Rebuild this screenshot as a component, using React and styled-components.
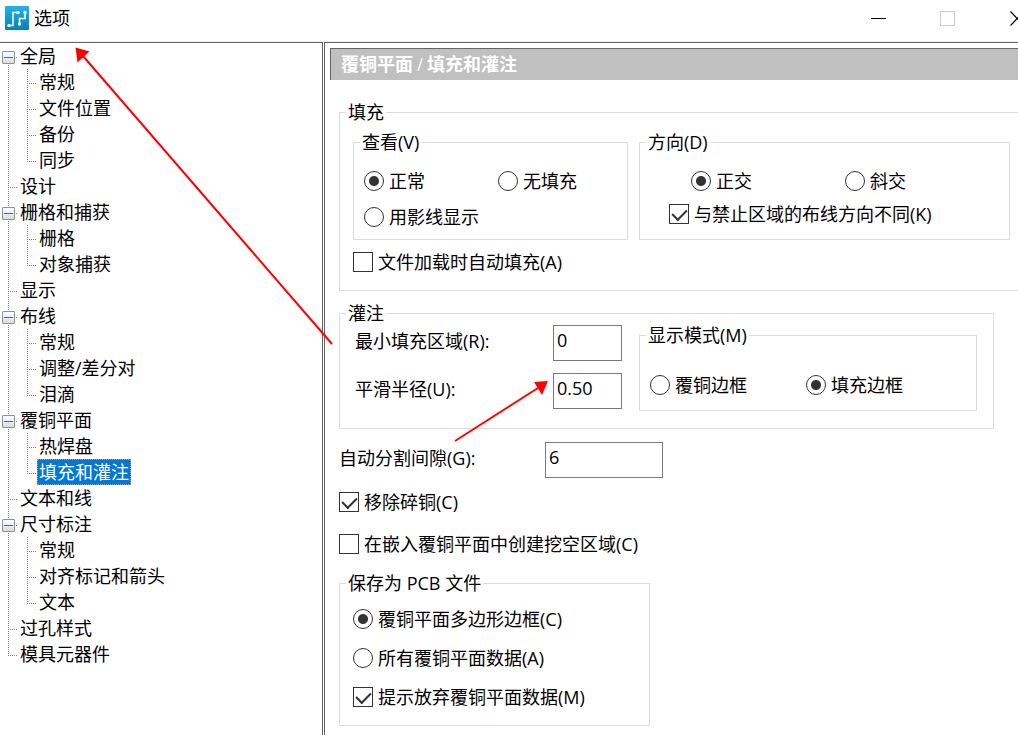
import { useState } from 'react'
import styled, { createGlobalStyle, css } from 'styled-components'

const GlobalStyle = createGlobalStyle`
    * {
        box-sizing: border-box;
    }
    html, body {
        margin: 0;
        overflow: hidden;
        background: #fff;
    }
    body, button, input {
        font-family: "Open Sans", "Noto Sans CJK SC", sans-serif;
        font-size: 18px;
        line-height: 20px;
        color: #000;
    }
`;

const Window = styled.div`
    position: relative;
    display: flex;
    flex-direction: column;
    min-width: 1052px;
    min-height: 100vh;
`;

const TitleBar = styled.header`
    display: flex;
    align-items: center;
    height: 42px;
    padding: 0 1px 5px 5px;
    border-bottom: 1px solid #f0f0f0;
`;

const Title = styled.h1`
    flex: 1;
    margin: 0 0 0 5px;
    font-size: 18px;
    font-weight: 400;
    line-height: 20px;
`;

const WindowButton = styled.button`
    display: flex;
    align-items: center;
    justify-content: center;
    width: 69px;
    height: 36px;
    padding: 0;
    border: 0;
    background: transparent;
`;

const Panes = styled.div`
    display: flex;
    flex: 1;
    gap: 1px;
`;

const TreePane = styled.nav`
    width: 323px;
    border-top: 1px solid #646464;
    border-right: 1px solid #646464;
`;

const TreeList = styled.ul`
    margin: 0;
    padding: 0;
    list-style: none;
`;

const TreeRow = styled.li`
    display: flex;
    height: 26px;
`;

const dotsDown = 'repeating-linear-gradient(to bottom, #808080 0 1px, transparent 1px 2px)';
const dotsAcross = 'repeating-linear-gradient(to right, #808080 0 1px, transparent 1px 2px)';

const Guide = styled.span`
    position: relative;
    flex: none;
    width: ${props => props.$inner ? 19 : 18}px;
    background-image: ${dotsDown}, ${dotsAcross};
    background-repeat: no-repeat;
    background-position: ${props => props.$inner ? 9 : 8}px ${props => props.$from || 0}px, right 14px;
    background-size: 1px ${props => props.$to || 26}px, ${props => props.$branch ? 10 : 0}px 1px;
`;

const Expander = styled.button`
    position: absolute;
    left: 2px;
    top: 8px;
    width: 13px;
    height: 13px;
    padding: 0;
    border: 1px solid #919191;
    border-radius: 1px;
    background: linear-gradient(#4b63a7, #4b63a7) center / 9px 1px no-repeat, linear-gradient(#fff, #dcdcdc);
`;

const TreeLabel = styled.span`
    height: 26px;
    padding: 0 2px;
    line-height: 26px;
    white-space: nowrap;
    ${props => props.$selected && css`
        padding: 0 1px;
        border: 1px dotted #ff8728;
        line-height: 24px;
        background: #0078d7;
        color: #fff;
    `}
`;

const SettingsPane = styled.main`
    flex: 1;
    padding: 5px 0 0 5px;
    border-top: 1px solid #646464;
    border-left: 1px solid #646464;
`;

const Banner = styled.h2`
    height: 32px;
    margin: 0;
    padding-left: 10px;
    border-top: 1px solid #646464;
    border-left: 1px solid #646464;
    background: #c0c0c0;
    color: #fff;
    font-family: "Liberation Serif", "Noto Sans CJK SC", serif;
    font-size: 18px;
    font-weight: 700;
    line-height: 32px;
`;

const Form = styled.form`
    display: flex;
    flex-direction: column;
    align-items: flex-start;
    padding: 22px 28px 0 9px;
`;

const Group = styled.fieldset`
    min-width: 0;
    margin: 0;
    padding: ${props => props.$padding};
    border: 1px solid #dcdcdc;
`;

const FillGroup = styled(Group)`
    align-self: stretch;
    margin-bottom: 12px;
`;

const PourGroup = styled(Group)`
    align-self: stretch;
    margin: 0 30px 13px 0;
`;

const PcbGroup = styled(Group)`
    width: 311px;
    margin-top: 19px;
`;

// the legend starts 7px in from the left edge, whatever padding the group has
const Legend = styled.legend`
    margin-left: ${props => 6 - props.$inset}px;
    padding: 0 2px;
    line-height: 20px;
`;

const FillColumns = styled.div`
    display: grid;
    grid-template-columns: 275fr 371fr;
    gap: 11px;
    margin-bottom: 12px;
`;

const PourColumns = styled.div`
    display: grid;
    grid-template-columns: 269px 1fr;
    align-items: start;
    gap: 17px;
`;

const Stack = styled.div`
    display: flex;
    flex-direction: column;
    align-items: flex-start;
    gap: ${props => props.$gap}px;
`;

const FieldStack = styled(Stack)`
    padding-left: 2px;
`;

const OptionRow = styled.div`
    display: grid;
    grid-template-columns: ${props => props.$column}px auto;
    padding-left: ${props => props.$indent || 0}px;
`;

const OptionLabel = styled.label`
    display: flex;
    align-items: center;
    gap: 5px;
    height: 20px;
    white-space: nowrap;
`;

const RadioInput = styled.input`
    appearance: none;
    flex: none;
    width: 20px;
    height: 20px;
    margin: 0;
    border: 1px solid #333;
    border-radius: 50%;
    background: #fff;
    &:checked {
        background: radial-gradient(circle, #333 0 4.5px, #fff 5.5px);
    }
`;

const CheckInput = styled.input`
    appearance: none;
    flex: none;
    display: flex;
    justify-content: center;
    width: 20px;
    height: 20px;
    margin: 0;
    padding-top: 1px;
    border: 1px solid #333;
    background: #fff;
    &:checked::after {
        content: "";
        width: 7px;
        height: 12px;
        border: solid #333;
        border-width: 0 2px 2px 0;
        transform: rotate(45deg);
    }
`;

const FieldRow = styled.div`
    display: flex;
    align-items: flex-start;
`;

const FieldLabel = styled.label`
    width: ${props => props.$width}px;
    line-height: 32px;
    white-space: nowrap;
`;

const TextInput = styled.input`
    width: ${props => props.$width}px;
    height: 36px;
    padding: 0 3px 6px;
    border: 1px solid #7a7a7a;
    border-radius: 0;
    background: #fff;
`;

const GapRow = styled(FieldRow)`
    margin-bottom: 14px;
`;

const Arrows = styled.svg`
    position: absolute;
    left: 0;
    top: 0;
    pointer-events: none;
`;

const tree = [
    { text: '全局', children: ['常规', '文件位置', '备份', '同步'] },
    { text: '设计' },
    { text: '栅格和捕获', children: ['栅格', '对象捕获'] },
    { text: '显示' },
    { text: '布线', children: ['常规', '调整/差分对', '泪滴'] },
    { text: '覆铜平面', children: ['热焊盘', '填充和灌注'] },
    { text: '文本和线' },
    { text: '尺寸标注', children: ['常规', '对齐标记和箭头', '文本'] },
    { text: '过孔样式' },
    { text: '模具元器件' },
];

const Logo = () => (
    <svg width="24" height="24" viewBox="0 0 24 24" aria-hidden="true">
        <defs>
            <linearGradient id="logo-bg" x1="0" y1="0" x2="0" y2="1">
                <stop offset="0" stopColor="#1cb5ee" />
                <stop offset="1" stopColor="#0a7fb0" />
            </linearGradient>
        </defs>
        <rect width="24" height="24" rx="1" fill="url(#logo-bg)" />
        <g fill="none" stroke="#fff" strokeWidth="1.5">
            <path d="M4 19.5H8V6.5H12.5" />
            <path d="M14.5 18V12.5H20V6.5" />
        </g>
        <g fill="#fff">
            <circle cx="4" cy="19.5" r="1.7" />
            <circle cx="13" cy="6.5" r="1.7" />
            <circle cx="14.5" cy="18" r="1.7" />
            <circle cx="20" cy="6.5" r="1.7" />
        </g>
    </svg>
)

const Radio = ({ name, label, checked }) => (
    <OptionLabel>
        <RadioInput type="radio" name={name} defaultChecked={checked} />
        {label}
    </OptionLabel>
)

const Check = ({ label, checked }) => (
    <OptionLabel>
        <CheckInput type="checkbox" defaultChecked={checked} />
        {label}
    </OptionLabel>
)

const Tree = () => {
    const [closed, setClosed] = useState({})
    const toggle = (text) => setClosed({ ...closed, [text]: !closed[text] })

    return (
        <TreePane>
            <TreeList>
                {tree.map((node, i) => [
                    <TreeRow key={node.text}>
                        <Guide $branch $from={i === 0 ? 14 : 0} $to={i === tree.length - 1 ? 14 : 26}>
                            {node.children && <Expander type="button" aria-label={node.text} onClick={() => toggle(node.text)} />}
                        </Guide>
                        <TreeLabel>{node.text}</TreeLabel>
                    </TreeRow>,
                    !closed[node.text] && node.children?.map((child, j) => (
                        <TreeRow key={node.text + child}>
                            <Guide />
                            <Guide $inner $branch $to={j === node.children.length - 1 ? 14 : 26} />
                            <TreeLabel $selected={child === '填充和灌注'}>{child}</TreeLabel>
                        </TreeRow>
                    )),
                ])}
            </TreeList>
        </TreePane>
    )
}

const App = () => {
    return (
        <Window>
            <GlobalStyle />
            <TitleBar>
                <Logo />
                <Title>选项</Title>
                <WindowButton type="button" aria-label="最小化">
                    <svg width="15" height="15"><path d="M0 7.5H15" stroke="#000" /></svg>
                </WindowButton>
                <WindowButton type="button" aria-label="最大化" disabled>
                    <svg width="15" height="15"><rect x="0.5" y="0.5" width="14" height="14" fill="none" stroke="#ccc" /></svg>
                </WindowButton>
                <WindowButton type="button" aria-label="关闭">
                    <svg width="15" height="15"><path d="M1.5 0.5L15 14.5M15 0.5L1.5 14.5" stroke="#000" strokeWidth="1.2" /></svg>
                </WindowButton>
            </TitleBar>
            <Panes>
                <Tree />
                <SettingsPane>
                    <Banner>覆铜平面 / 填充和灌注</Banner>
                    <Form>
                        <FillGroup $padding="10px 13px 18px">
                            <Legend $inset={13}>填充</Legend>
                            <FillColumns>
                                <Group $padding="19px 10px 12px">
                                    <Legend $inset={10}>查看(V)</Legend>
                                    <Stack $gap={16}>
                                        <OptionRow $column={134}>
                                            <Radio name="view" label="正常" checked />
                                            <Radio name="view" label="无填充" />
                                        </OptionRow>
                                        <Radio name="view" label="用影线显示" />
                                    </Stack>
                                </Group>
                                <Group $padding="19px 10px 12px 29px">
                                    <Legend $inset={29}>方向(D)</Legend>
                                    <Stack $gap={13}>
                                        <OptionRow $column={154} $indent={22}>
                                            <Radio name="direction" label="正交" checked />
                                            <Radio name="direction" label="斜交" />
                                        </OptionRow>
                                        <Check label="与禁止区域的布线方向不同(K)" checked />
                                    </Stack>
                                </Group>
                            </FillColumns>
                            <Check label="文件加载时自动填充(A)" />
                        </FillGroup>

                        <PourGroup $padding="2px 16px 17px 13px">
                            <Legend $inset={13}>灌注</Legend>
                            <PourColumns>
                                <FieldStack $gap={12}>
                                    <FieldRow>
                                        <FieldLabel htmlFor="min-area" $width={198}>最小填充区域(R):</FieldLabel>
                                        <TextInput id="min-area" defaultValue="0" $width={69} />
                                    </FieldRow>
                                    <FieldRow>
                                        <FieldLabel htmlFor="radius" $width={198}>平滑半径(U):</FieldLabel>
                                        <TextInput id="radius" defaultValue="0.50" $width={69} />
                                    </FieldRow>
                                </FieldStack>
                                <Group $padding="30px 10px 15px">
                                    <Legend $inset={10}>显示模式(M)</Legend>
                                    <OptionRow $column={156}>
                                        <Radio name="mode" label="覆铜边框" />
                                        <Radio name="mode" label="填充边框" checked />
                                    </OptionRow>
                                </Group>
                            </PourColumns>
                        </PourGroup>

                        <GapRow>
                            <FieldLabel htmlFor="gap" $width={206}>自动分割间隙(G):</FieldLabel>
                            <TextInput id="gap" defaultValue="6" $width={118} />
                        </GapRow>
                        <Stack $gap={22}>
                            <Check label="移除碎铜(C)" checked />
                            <Check label="在嵌入覆铜平面中创建挖空区域(C)" />
                        </Stack>

                        <PcbGroup $padding="16px 13px 18px">
                            <Legend $inset={13}>保存为 PCB 文件</Legend>
                            <Stack $gap={19}>
                                <Radio name="pcb" label="覆铜平面多边形边框(C)" checked />
                                <Radio name="pcb" label="所有覆铜平面数据(A)" />
                                <Check label="提示放弃覆铜平面数据(M)" checked />
                            </Stack>
                        </PcbGroup>
                    </Form>
                </SettingsPane>
            </Panes>
            <Arrows width="560" height="450" aria-hidden="true">
                <g stroke="#f00" strokeWidth="2">
                    <path d="M332 344L83 56" />
                    <path d="M455 441L538 388" />
                </g>
                <path d="M75.5 47.5L89.5 51.5L77.5 62.5Z" fill="#f00" />
                <path d="M548 381L534 382L542 395Z" fill="#f00" />
            </Arrows>
        </Window>
    )
}

export default App;
